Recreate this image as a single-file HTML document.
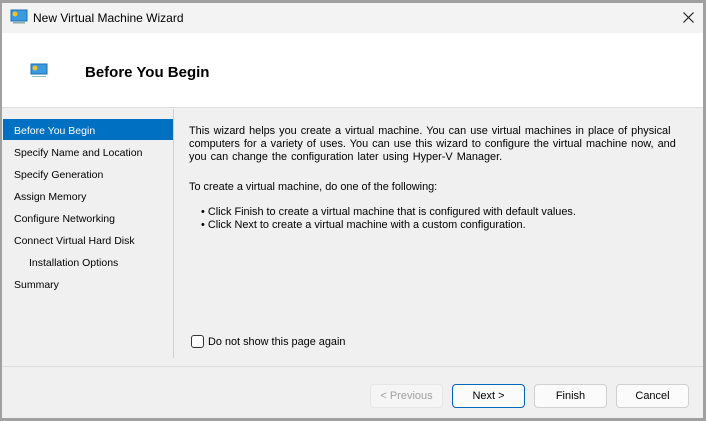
<!DOCTYPE html><html><head><style>
body{margin:0;width:706px;height:421px;background:#a0a0a0;position:relative;overflow:hidden;font-family:"Liberation Sans",sans-serif;font-size:10.5px;color:#000}
.win{position:absolute;left:2px;top:3px;width:701px;height:415px;background:#f0f0f0}
.title{position:absolute;left:0;top:0;width:701px;height:30px;background:#f3f3f3;font-size:12px}
.hdr{position:absolute;left:0;top:30px;width:701px;height:74px;background:#fff;border-bottom:1px solid #dcdcdc}
.abs{position:absolute;white-space:nowrap}
.c{font-size:10.9px}
.nav div{position:absolute;left:12px;white-space:nowrap}
.btn{position:absolute;top:381px;width:71px;height:22px;border:1px solid #d0d0d0;border-radius:4px;background:#fbfbfb;text-align:center;line-height:22px;font-size:11px}
</style></head><body><div class="win">
<div class="title">
<svg class="abs" style="left:8px;top:6px" width="18" height="16"><rect x="1" y="1" width="16" height="11" fill="#3a9be0" stroke="#1a6fb0"/><circle cx="5" cy="5" r="2.5" fill="#f8c020"/><rect x="3" y="13" width="12" height="1.5" fill="#8aa"/></svg>
<div class="abs" style="left:31px;top:8px">New Virtual Machine Wizard</div>
<svg class="abs" style="left:681px;top:9px" width="11" height="11"><path d="M0.5 0.5L10.5 10.5M10.5 0.5L0.5 10.5" stroke="#222" stroke-width="1.2"/></svg>
</div>
<div class="hdr">
<svg class="abs" style="left:28px;top:30px" width="18" height="15"><rect x="1" y="1" width="16" height="10" fill="#3a9be0" stroke="#1a6fb0"/><circle cx="5" cy="5" r="2.5" fill="#f8c020"/><rect x="2" y="13" width="14" height="1" fill="#9bb"/></svg>
<div class="abs" style="left:83px;top:31px;font-size:15px;font-weight:bold">Before You Begin</div>
</div>
<div class="abs" style="left:1px;top:116px;width:170px;height:21px;background:#0071c2"></div>
<div class="nav">
<div style="top:122px;color:#fff">Before You Begin</div>
<div style="top:144px">Specify Name and Location</div>
<div style="top:166px">Specify Generation</div>
<div style="top:188px">Assign Memory</div>
<div style="top:210px">Configure Networking</div>
<div style="top:232px">Connect Virtual Hard Disk</div>
<div style="top:254px;left:27px">Installation Options</div>
<div style="top:276px">Summary</div>
</div>
<div class="abs" style="left:171px;top:106px;width:1px;height:249px;background:#d0d0d0"></div>
<div class="abs c" style="left:187px;top:122px;line-height:13px;word-spacing:1px">This wizard helps you create a virtual machine. You can use virtual machines in place of physical<br>computers for a variety of uses. You can use this wizard to configure the virtual machine now, and<br>you can change the configuration later using Hyper-V Manager.</div>
<div class="abs c" style="left:187px;top:178px">To create a virtual machine, do one of the following:</div>
<div class="abs c" style="left:199px;top:203px">• Click Finish to create a virtual machine that is configured with default values.</div>
<div class="abs c" style="left:199px;top:216px">• Click Next to create a virtual machine with a custom configuration.</div>
<div class="abs" style="left:189px;top:332px;width:11px;height:11px;border:1px solid #333;border-radius:3px;background:#fff"></div>
<div class="abs c" style="left:206px;top:333px">Do not show this page again</div>
<div class="abs" style="left:0;top:363px;width:701px;height:1px;background:#dcdcdc"></div>
<div class="btn" style="left:368px;color:#a0a0a0;border-color:#e6e6e6;background:#f5f5f5">&lt; Previous</div>
<div class="btn" style="left:450px;border-color:#0067c0">Next &gt;</div>
<div class="btn" style="left:532px">Finish</div>
<div class="btn" style="left:614px">Cancel</div>
</div></body></html>
